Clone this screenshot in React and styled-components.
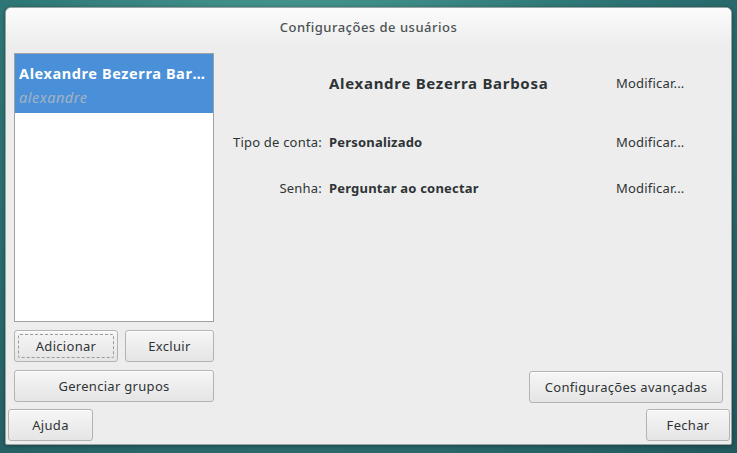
import React from "react";
import styled, { createGlobalStyle } from "styled-components";

const Global = createGlobalStyle`
  html, body { margin: 0; padding: 0; }
  body {
    width: 737px;
    height: 453px;
    overflow: hidden;
    font-family: "Noto Sans", "DejaVu Sans", sans-serif;
    letter-spacing: 0.2px;
    color: #2e3436;
  }
`

const Desktop = styled.div`
  width: 737px;
  height: 453px;
  box-sizing: border-box;
  padding: 7px 5px 8px 5px;
  background: radial-gradient(ellipse at 40% -20%, #4a9a92 0%, #2f7878 45%, #22585f 100%);
`

const Window = styled.div`
  height: 100%;
  box-sizing: border-box;
  display: flex;
  flex-direction: column;
  background: #ededed;
  border: 1px solid #9aa3a3;
  border-radius: 6px 6px 2px 2px;
  box-shadow: 0 1px 4px rgba(0, 0, 0, 0.35);
  overflow: hidden;
`

const TitleBar = styled.div`
  height: 37px;
  flex: none;
  display: flex;
  align-items: center;
  justify-content: center;
  font-size: 13px;
  font-weight: 500;
  letter-spacing: 0.5px;
  color: #4b5253;
  background: linear-gradient(#fcfcfc, #ededed);
`

const Main = styled.div`
  flex: 1;
  display: grid;
  grid-template-columns: 200px 1fr;
  padding: 8px 8px 0 8px;
  min-height: 0;
`

const LeftColumn = styled.div`
  display: flex;
  flex-direction: column;
  gap: 8px;
`

const UserList = styled.div`
  height: 269px;
  box-sizing: border-box;
  background: #fff;
  border: 1px solid #a1a1a1;
`

const UserItem = styled.div`
  height: 59px;
  box-sizing: border-box;
  padding: 8px 4px 0 4px;
  background: ${p => (p.selected ? "#4a90d9" : "transparent")};
`

const UserName = styled.div`
  font-size: 14.5px;
  font-weight: 700;
  letter-spacing: 0.6px;
  color: #fff;
  white-space: nowrap;
  overflow: hidden;
  text-overflow: ellipsis;
  line-height: 22px;
`

const UserLogin = styled.div`
  font-size: 14.5px;
  font-style: italic;
  letter-spacing: 0.5px;
  color: #a3b2c3;
  line-height: 26px;
`

const ButtonRow = styled.div`
  display: grid;
  grid-template-columns: 104px 89px;
  justify-content: space-between;
`

const Button = styled.button`
  height: 32px;
  width: ${p => p.width || "auto"};
  box-sizing: border-box;
  padding: 0 14px;
  font-family: inherit;
  font-size: 13px;
  letter-spacing: 0.3px;
  color: #2e3436;
  background: linear-gradient(#f6f6f6, #e5e5e5);
  border: 1px solid #b3b3b0;
  border-radius: 3px;
  box-shadow: inset 0 1px #fff;
  position: relative;
  outline: none;
  cursor: pointer;

  ${p =>
    p.focused &&
    `
    &::after {
      content: "";
      position: absolute;
      inset: 3px;
      border: 1px dashed #9a9a9a;
      border-radius: 2px;
    }
  `}
`

const RightPanel = styled.div`
  display: flex;
  flex-direction: column;
`

const InfoRow = styled.div`
  height: ${p => p.h}px;
  margin-bottom: ${p => p.mb || 0}px;
  display: grid;
  grid-template-columns: 108px 280px auto;
  column-gap: 7px;
  align-items: center;
  font-size: 13px;
`

const Label = styled.div`
  text-align: right;
  color: #2e3436;
`

const Value = styled.div`
  font-weight: 700;
  font-size: ${p => (p.big ? "15px" : "13px")};
  letter-spacing: ${p => (p.big ? "0.7px" : "0.2px")};
  color: #2e3436;
`

const Modify = styled.div`
  color: #2e3436;
`

const AdvancedRow = styled.div`
  margin-top: auto;
  display: flex;
  justify-content: flex-end;
`

const ActionBar = styled.div`
  flex: none;
  display: flex;
  justify-content: space-between;
  padding: 6px 1px 3px 2px;
`

export default function App() {
  return (
    <>
      <Global />
      <Desktop>
        <Window>
          <TitleBar>Configurações de usuários</TitleBar>
          <Main>
            <LeftColumn>
              <UserList>
                <UserItem selected>
                  <UserName>Alexandre Bezerra Barbosa</UserName>
                  <UserLogin>alexandre</UserLogin>
                </UserItem>
              </UserList>
              <ButtonRow>
                <Button focused>Adicionar</Button>
                <Button>Excluir</Button>
              </ButtonRow>
              <Button>Gerenciar grupos</Button>
            </LeftColumn>
            <RightPanel>
              <InfoRow h={60} mb={6}>
                <Label />
                <Value big>Alexandre Bezerra Barbosa</Value>
                <Modify>Modificar...</Modify>
              </InfoRow>
              <InfoRow h={46}>
                <Label>Tipo de conta:</Label>
                <Value>Personalizado</Value>
                <Modify>Modificar...</Modify>
              </InfoRow>
              <InfoRow h={46}>
                <Label>Senha:</Label>
                <Value>Perguntar ao conectar</Value>
                <Modify>Modificar...</Modify>
              </InfoRow>
              <AdvancedRow>
                <Button width="194px">Configurações avançadas</Button>
              </AdvancedRow>
            </RightPanel>
          </Main>
          <ActionBar>
            <Button width="85px">Ajuda</Button>
            <Button width="84px">Fechar</Button>
          </ActionBar>
        </Window>
      </Desktop>
    </>
  );
}
